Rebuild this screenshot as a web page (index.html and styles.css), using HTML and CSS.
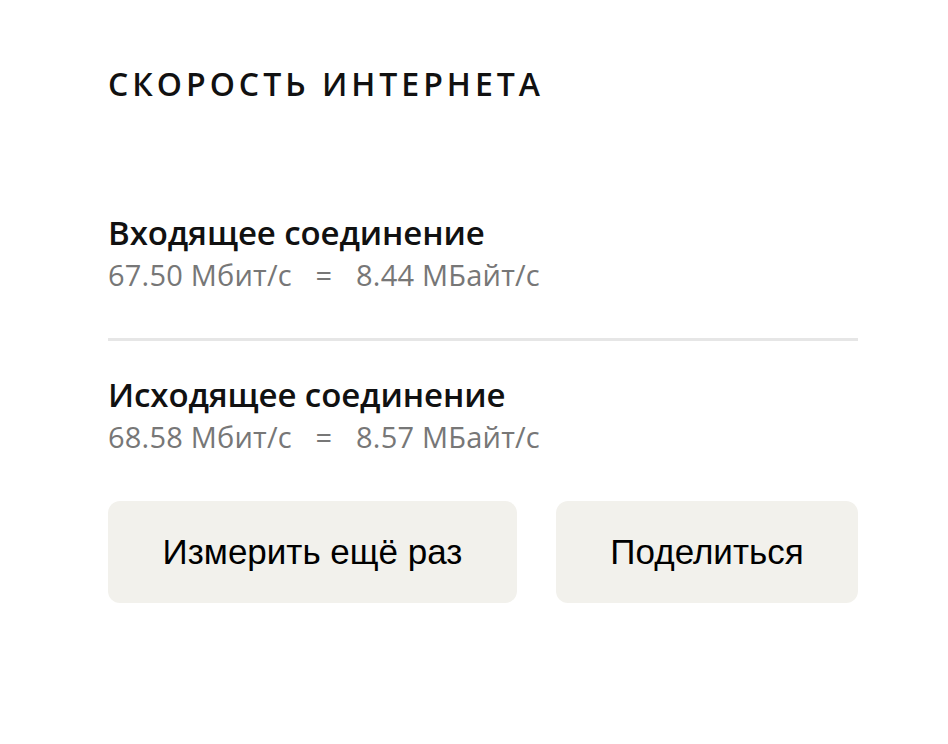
FILE: index.html
```html
<!DOCTYPE html>
<html lang="ru">
<head>
  <meta charset="UTF-8">
  <meta name="viewport" content="width=device-width, initial-scale=1.0">
  <title>Скорость интернета</title>
  <link rel="stylesheet" href="styles.css">
</head>
<body>
  <div class="panel">
    <h1 class="title">Скорость интернета</h1>

    <!-- входящее -->
    <div class="result">
      <div class="result-name">Входящее соединение</div>
      <div class="result-value">67.50 Мбит/с <span class="eq">=</span> 8.44 МБайт/с</div>
    </div>

    <div class="divider"></div>

    <!-- исходящее -->
    <div class="result result-next">
      <div class="result-name">Исходящее соединение</div>
      <div class="result-value">68.58 Мбит/с <span class="eq">=</span> 8.57 МБайт/с</div>
    </div>

    <div class="actions">
      <button class="btn btn-wide">Измерить ещё раз</button>
      <button class="btn">Поделиться</button>
    </div>
  </div>
</body>
</html>
```

FILE: styles.css
```css
body {
  margin: 0;
  background-color: #ffffff;
  font-family: 'Open Sans', 'Noto Sans', sans-serif;
  color: #000;
}
.panel {
  width: 750px;
  padding: 62px 0 0 108px;
}
.title {
  margin: 0;
  font-size: 32px;
  font-weight: 600;
  line-height: 44px;
  letter-spacing: 4px;
  text-transform: uppercase;
  color: #111;
}
.result {
  margin-top: 106px;
}
.result-name {
  font-size: 33px;
  font-weight: 600;
  line-height: 42px;
  letter-spacing: -0.1px;
  color: #111;
}
.result-value {
  margin-top: 3px;
  font-size: 29px;
  line-height: 36px;
  color: #777;
  letter-spacing: 0.2px;
}
.eq {
  margin: 0 16px;
}
.divider {
  height: 3px;
  background-color: #e6e6e6;
  margin-top: 45px;
}
.result-next {
  margin-top: 33px;
}
.actions {
  display: flex;
  gap: 39px;
  margin-top: 46px;
}
.btn {
  height: 102px;
  width: 302px;
  border: none;
  border-radius: 12px;
  background-color: #f2f1ec;
  font-family: 'Liberation Sans', Arial, sans-serif;
  font-size: 35px;
  color: #000;
  cursor: pointer;
}
.btn-wide {
  width: 409px;
}
```
